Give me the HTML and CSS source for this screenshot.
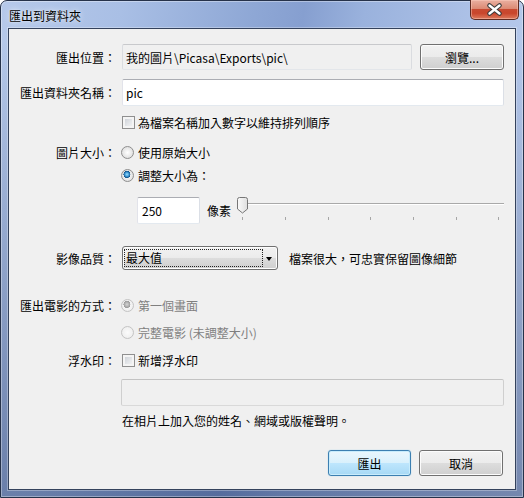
FILE: index.html
```html
<!DOCTYPE html>
<html lang="zh-Hant">
<head>
<meta charset="utf-8">
<title>匯出到資料夾</title>
<link rel="stylesheet" href="styles.css">
</head>
<body>
<div class="window">
  <div class="titlebar">
    <span class="title">匯出到資料夾</span>
    <div class="close">
      <svg width="47" height="18" viewBox="0 0 47 18">
        <path d="M18.5 4.5 L28.5 12.5 M28.5 4.5 L18.5 12.5" stroke="#3b3b3b" stroke-width="4.6" stroke-linecap="round" fill="none"/>
        <path d="M18.5 4.5 L28.5 12.5 M28.5 4.5 L18.5 12.5" stroke="#ffffff" stroke-width="2.4" stroke-linecap="round" fill="none"/>
      </svg>
    </div>
  </div>
  <div class="client">
    <div class="row r1">
      <span class="label">匯出位置：</span>
      <div class="field readonly grow">我的圖片\Picasa\Exports\pic\</div>
      <button class="btn browse">瀏覽...</button>
    </div>
    <div class="row r2">
      <span class="label">匯出資料夾名稱：</span>
      <div class="field grow">pic</div>
    </div>
    <div class="row r3">
      <span class="label"></span>
      <span class="check"></span>
      <span class="opt">為檔案名稱加入數字以維持排列順序</span>
    </div>
    <div class="row r4">
      <span class="label">圖片大小：</span>
      <span class="radio"></span>
      <span class="opt">使用原始大小</span>
    </div>
    <div class="row r5">
      <span class="label"></span>
      <span class="radio on"></span>
      <span class="opt">調整大小為：</span>
    </div>
    <div class="row r6">
      <span class="label"></span>
      <div class="field num">250</div>
      <span class="unit">像素</span>
      <svg class="slider" width="268" height="27" viewBox="0 0 268 27">
        <defs>
          <linearGradient id="thumb" x1="0" y1="0" x2="1" y2="0">
            <stop offset="0" stop-color="#fbfbfb"/>
            <stop offset="1" stop-color="#dedede"/>
          </linearGradient>
        </defs>
        <rect x="6" y="6" width="262" height="1" fill="#a9a9a9"/>
        <rect x="6" y="7" width="262" height="1" fill="#ffffff"/>
        <path d="M1.5 2.5 a2 2 0 0 1 2 -2 h6 a2 2 0 0 1 2 2 v9.5 l-5 4 l-5 -4 z" fill="url(#thumb)" stroke="#767676" stroke-width="1"/>
        <g fill="#a6a6a6">
          <rect x="6" y="20" width="1" height="3"/>
          <rect x="49" y="20" width="1" height="3"/>
          <rect x="92" y="20" width="1" height="3"/>
          <rect x="134" y="20" width="1" height="3"/>
          <rect x="177" y="20" width="1" height="3"/>
          <rect x="220" y="20" width="1" height="3"/>
          <rect x="262" y="20" width="1" height="3"/>
        </g>
      </svg>
    </div>
    <div class="row r7">
      <span class="label">影像品質：</span>
      <div class="combo">
        <span class="focus">最大值</span>
        <span class="arrow"></span>
      </div>
      <span class="hint">檔案很大，可忠實保留圖像細節</span>
    </div>
    <div class="row r8">
      <span class="label">匯出電影的方式：</span>
      <span class="radio dis on"></span>
      <span class="opt dis-text">第一個畫面</span>
    </div>
    <div class="row r9">
      <span class="label"></span>
      <span class="radio dis"></span>
      <span class="opt dis-text">完整電影 (未調整大小)</span>
    </div>
    <div class="row r10">
      <span class="label">浮水印：</span>
      <span class="check"></span>
      <span class="opt">新增浮水印</span>
    </div>
    <div class="row r11">
      <span class="label"></span>
      <div class="field disabled grow"></div>
    </div>
    <div class="row r12">
      <span class="label"></span>
      <span class="help">在相片上加入您的姓名、網域或版權聲明。</span>
    </div>
    <div class="buttons">
      <button class="btn default">匯出</button>
      <button class="btn cancel">取消</button>
    </div>
  </div>
</div>
</body>
</html>
```
FILE: styles.css
```css
* { box-sizing: border-box; }

body {
  margin: 0;
  font-family: "Noto Sans CJK TC", "Noto Sans", sans-serif;
  font-size: 12px;
  color: #000;
  background: #ffffff;
}

.window {
  width: 524px;
  height: 498px;
  border: 1px solid #26324a;
  border-radius: 7px 7px 0 0;
  padding: 0 7px 7px 7px;
  display: flex;
  flex-direction: column;
  background:
    linear-gradient(to bottom, rgba(255,255,255,0) 0px, rgba(255,255,255,0) 40px, rgba(25,45,95,0.45) 498px),
    linear-gradient(100deg, #b6c9ea 0%, #a9bfe5 20%, #8ea7d5 42%, #869fd0 50%, #9ab2dd 60%, #afc3e8 80%, #bfd0ee 100%);
  box-shadow: inset 0 0 0 1px rgba(255,255,255,0.35);
}

.titlebar {
  height: 27px;
  display: flex;
  align-items: flex-start;
  flex: none;
}

.title {
  margin: 8px 0 0 1px;
  line-height: 14px;
  text-shadow: 0 0 6px rgba(255,255,255,0.8), 0 0 2px rgba(255,255,255,0.6);
}

.close {
  margin-left: auto;
  margin-top: -1px;
  margin-right: -3px;
  width: 49px;
  height: 20px;
  border: 1px solid #5e2b22;
  border-top: none;
  border-radius: 0 0 5px 5px;
  background: linear-gradient(to bottom, #eab0a1 0%, #dc8a74 45%, #c84a31 50%, #c9462c 70%, #dd7a5d 100%);
  box-shadow: inset 0 0 0 1px rgba(255,210,195,0.45);
  display: flex;
  align-items: center;
  justify-content: center;
}

.close svg { display: block; }

.client {
  flex: 1;
  background: #f0f0f0;
  border: 1px solid #34425c;
  box-shadow: 0 0 0 1px rgba(255,255,255,0.3);
  padding: 15px 11px 0 0;
  display: flex;
  flex-direction: column;
}

.row {
  display: flex;
  align-items: center;
  flex: none;
}

.label {
  width: 107px;
  flex: none;
  text-align: right;
  margin-right: 5px;
  white-space: nowrap;
}

.grow { flex: 1; }

.r1 { height: 26px; }
.r2 { height: 27px; margin-top: 9px; }
.r3 { height: 16px; margin-top: 8px; }
.r4 { height: 16px; margin-top: 14px; }
.r5 { height: 16px; margin-top: 7px; }
.r6 { height: 27px; margin-top: 14px; }
.r7 { height: 24px; margin-top: 22px; }
.r8 { height: 16px; margin-top: 27px; }
.r9 { height: 16px; margin-top: 11px; }
.r10 { height: 16px; margin-top: 12px; }
.r11 { height: 27px; margin-top: 11px; }
.r12 { height: 16px; margin-top: 6px; }

.field {
  height: 100%;
  margin-left: 1px;
  border: 1px solid;
  border-color: #abadb3 #dbdfe6 #e3e9ef #e2e3ea;
  border-radius: 2px;
  background: #ffffff;
  padding-left: 3px;
  display: flex;
  align-items: center;
  white-space: nowrap;
  overflow: hidden;
}

.field.readonly {
  background: #f0f0f0;
  border-color: #c8c9cc #dadce0 #e3e6ea #dadce0;
}

.field.disabled {
  margin-left: 0;
  background: #f0f0f0;
  border-color: #c3c3c3 #cfcfcf #d9d9d9 #cfcfcf;
}

.field.num {
  width: 63px;
  flex: none;
  margin-left: 16px;
  padding-left: 4px;
}

.unit { margin-left: 7px; }

.slider {
  display: block;
  margin-left: 5px;
  flex: none;
}

.btn {
  font-family: inherit;
  font-size: 12px;
  color: #000;
  height: 26px;
  padding: 0;
  border: 1px solid #707070;
  border-radius: 3px;
  background: linear-gradient(to bottom, #f2f2f2 0%, #ebebeb 50%, #dddddd 50%, #cfcfcf 100%);
  box-shadow: inset 0 0 0 1px #fcfcfc;
}

.browse {
  width: 84px;
  margin-left: 8px;
  height: 26px;
}

.check {
  width: 13px;
  height: 13px;
  flex: none;
  margin-left: 1px;
  border: 1px solid #8f8f8f;
  background: linear-gradient(135deg, #c6cbd1 0%, #e6e8eb 60%, #f7f7f7 100%);
  box-shadow: inset 0 0 0 2px #f4f4f4;
}

.radio {
  width: 13px;
  height: 13px;
  flex: none;
  border-radius: 50%;
  border: 1px solid #8f8f8f;
  background: radial-gradient(circle at 50% 50%, #ffffff 0%, #e8e8e8 55%, #d4d4d4 100%);
  position: relative;
}

.radio.on {
  background:
    radial-gradient(circle at 45% 40%, #9fe0ff 0px, #3f9ad6 2px, #0e4e86 3.4px, rgba(0,0,0,0) 3.6px),
    radial-gradient(circle at 50% 50%, #ffffff 0%, #e8e8e8 55%, #d4d4d4 100%);
}

.radio.dis {
  border-color: #c4c4c4;
  background: radial-gradient(circle at 50% 50%, #fbfbfb 0%, #f1f1f1 60%, #e6e6e6 100%);
}

.radio.dis.on {
  background:
    radial-gradient(circle at 45% 40%, #d6d6d6 0px, #b4b4b4 2px, #9a9a9a 3.4px, rgba(0,0,0,0) 3.6px),
    radial-gradient(circle at 50% 50%, #fbfbfb 0%, #f1f1f1 60%, #e6e6e6 100%);
}

.opt {
  margin-left: 4px;
  white-space: nowrap;
}

.check + .opt { margin-left: 3px; }

.dis-text { color: #7f7f7f; }

.combo {
  width: 156px;
  height: 24px;
  flex: none;
  margin-left: 1px;
  border: 1px solid #707070;
  border-radius: 3px;
  background: linear-gradient(to bottom, #f2f2f2 0%, #ebebeb 50%, #dddddd 50%, #cfcfcf 100%);
  box-shadow: inset 0 0 0 1px #fcfcfc;
  padding: 2px 0 2px 1px;
  display: flex;
  align-items: stretch;
}

.focus {
  flex: 1;
  border: 1px dotted #222;
  padding-left: 1px;
  display: flex;
  align-items: center;
  line-height: 1;
}

.arrow {
  width: 14px;
  flex: none;
  position: relative;
}

.arrow::after {
  content: "";
  position: absolute;
  left: 3px;
  top: 8px;
  border-left: 3.5px solid transparent;
  border-right: 3.5px solid transparent;
  border-top: 4px solid #000;
}

.hint {
  margin-left: 11px;
  white-space: nowrap;
}

.help {
  margin-left: 1px;
  white-space: nowrap;
}

.buttons {
  display: flex;
  justify-content: flex-end;
  gap: 8px;
  margin-top: 22px;
  margin-right: 1px;
}

.btn.default {
  width: 83px;
  border-color: #3c7fb1;
  background: linear-gradient(to bottom, #eaf6fd 0%, #d9f0fc 50%, #bee6fd 50%, #a7d9f5 100%);
  box-shadow: inset 0 0 0 1px #c8ecfc, 0 0 1px 0 #70c0e7;
}

.btn.cancel { width: 84px; }
```
